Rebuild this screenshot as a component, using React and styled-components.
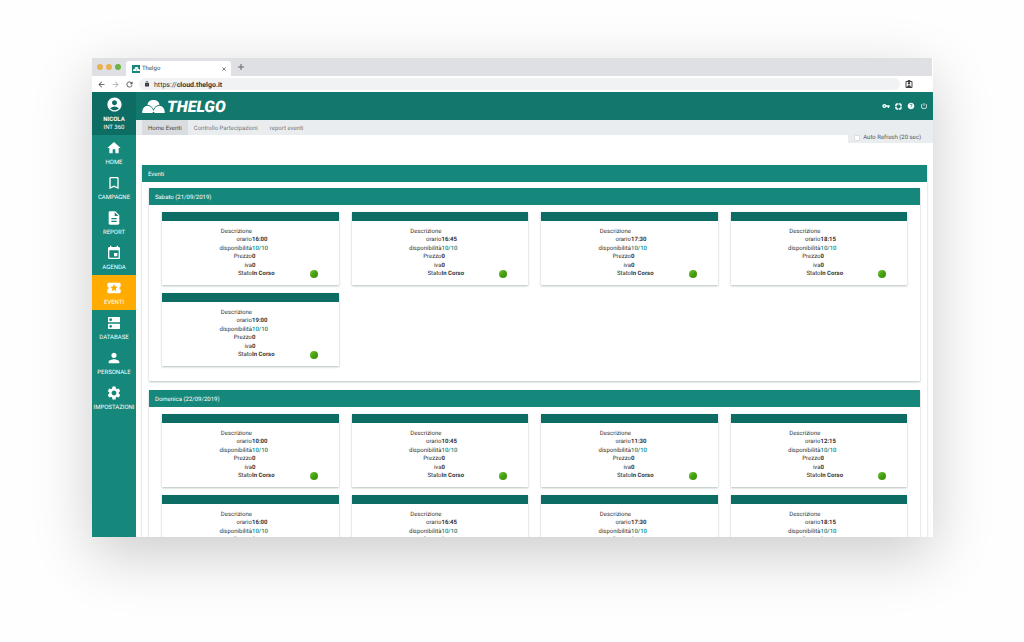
import React from 'react';
import styled, { createGlobalStyle } from 'styled-components';
import {
  MdAccountCircle,
  MdArrowBack,
  MdArrowForward,
  MdBookmarkBorder,
  MdDescription,
  MdDns,
  MdEvent,
  MdHelp,
  MdHome,
  MdLocalPlay,
  MdLock,
  MdPerson,
  MdPowerSettingsNew,
  MdRefresh,
  MdSettings,
  MdVpnKey,
} from 'react-icons/md';

const menu = [
  { label: 'HOME', icon: MdHome },
  { label: 'CAMPAGNE', icon: MdBookmarkBorder },
  { label: 'REPORT', icon: MdDescription },
  { label: 'AGENDA', icon: MdEvent },
  { label: 'EVENTI', icon: MdLocalPlay, active: true },
  { label: 'DATABASE', icon: MdDns },
  { label: 'PERSONALE', icon: MdPerson },
  { label: 'IMPOSTAZIONI', icon: MdSettings },
];

const tabs = ['Home Eventi', 'Controllo Partecipazioni', 'report eventi'];

const days = [
  {
    title: 'Sabato (21/09/2019)',
    slots: ['16:00', '16:45', '17:30', '18:15', '19:00'],
  },
  {
    title: 'Domenica (22/09/2019)',
    slots: ['10:00', '10:45', '11:30', '12:15', '16:00', '16:45', '17:30', '18:15'],
  },
];

const LogoMark = ({ width, height }) => (
  <svg width={width} height={height} viewBox="0 0 68 39" fill="currentColor" aria-hidden="true">
    <path d="M34 0c10 0 17 6 18 14-8 1-14 6-18 14-4-8-10-13-18-14C17 6 24 0 34 0z" />
    <path d="M0 39c0-13 7-22 16-22s15 7 18 16c3-9 9-16 18-16s16 9 16 22H38l-4-4-4 4z" />
  </svg>
);

const Slot = ({ time }) => (
  <Card>
    <CardHeader />
    <CardBody>
      <Field>
        <dt>Descrizione</dt>
        <dd />
      </Field>
      <Field>
        <dt>orario</dt>
        <Value>{time}</Value>
      </Field>
      <Field>
        <dt>disponibilità</dt>
        <Seats>10/10</Seats>
      </Field>
      <Field>
        <dt>Prezzo</dt>
        <Value>0</Value>
      </Field>
      <Field>
        <dt>iva</dt>
        <Value>0</Value>
      </Field>
      <Field>
        <dt>Stato</dt>
        <Value>
          In Corso
          <StatusDot />
        </Value>
      </Field>
    </CardBody>
  </Card>
);

const App = () => {
  return (
    <Page>
      <GlobalStyle />
      <Window>
        <TabStrip>
          <Lights>
            <Light $color="#e9b04f" />
            <Light $color="#e9b04f" />
            <Light $color="#6cb33f" />
          </Lights>
          <BrowserTab>
            <Favicon>
              <LogoMark width={7} height={4} />
            </Favicon>
            <TabTitle>Thelgo</TabTitle>
            <TabButton aria-label="Close tab">
              <svg width="4" height="4" viewBox="0 0 4 4" stroke="currentColor" strokeWidth="0.8" fill="none">
                <path d="M.3.3l3.4 3.4M3.7.3L.3 3.7" />
              </svg>
            </TabButton>
          </BrowserTab>
          <TabButton aria-label="New tab">
            <svg width="6" height="6" viewBox="0 0 6 6" stroke="currentColor" fill="none">
              <path d="M3 0v6M0 3h6" />
            </svg>
          </TabButton>
        </TabStrip>
        <AddressRow>
          <BrowserButton aria-label="Back"><MdArrowBack /></BrowserButton>
          <BrowserButton aria-label="Forward" $muted><MdArrowForward /></BrowserButton>
          <BrowserButton aria-label="Reload"><MdRefresh /></BrowserButton>
          <Address>
            <MdLock />
            <Url>https://<b>cloud.thelgo.it</b></Url>
          </Address>
          <BrowserButton aria-label="Profile">
            <svg width="8" height="8" viewBox="0 0 16 16" fill="none" stroke="currentColor" strokeWidth="2">
              <path d="M2 3h12v12H2zM6 1h4v2H6z" />
              <path d="M8 4a2 2 0 0 1 0 5 2 2 0 0 1 0-5zM4 14c0-5 8-5 8 0z" fill="currentColor" stroke="none" />
            </svg>
          </BrowserButton>
        </AddressRow>
        <Workspace>
          <Sidebar>
            <User>
              <MdAccountCircle />
              <UserName>NICOLA</UserName>
              <span>INT 360</span>
            </User>
            <nav>
              {menu.map(({ label, icon: Icon, active }) => (
                <MenuItem href="#" key={label} $active={active}>
                  <Icon />
                  {label}
                </MenuItem>
              ))}
            </nav>
          </Sidebar>
          <Main>
            <Header>
              <Brand>
                <LogoMark width={23} height={13} />
                THELGO
              </Brand>
              <Tools>
                <ToolButton aria-label="Password"><MdVpnKey /></ToolButton>
                <ToolButton aria-label="Support">
                  <svg width="7" height="7" viewBox="0 0 14 14" fill="none" stroke="currentColor" strokeWidth="3">
                    <rect x="2" y="2" width="10" height="10" rx="2" />
                    <path d="M7 0v4M7 10v4M0 7h4M10 7h4" stroke="#12776c" strokeWidth="1" />
                  </svg>
                </ToolButton>
                <ToolButton aria-label="Help"><MdHelp /></ToolButton>
                <ToolButton aria-label="Logout"><MdPowerSettingsNew /></ToolButton>
              </Tools>
            </Header>
            <SubBar>
              <Tabs>
                {tabs.map((tab, i) => (
                  <Tab href="#" key={tab} $active={i === 0}>{tab}</Tab>
                ))}
              </Tabs>
              <Refresh>
                <input type="checkbox" />
                Auto Refresh (20 sec)
              </Refresh>
            </SubBar>
            <Content>
              <Panel>
                <PanelTitle>Eventi</PanelTitle>
                <Days>
                  {days.map(day => (
                    <Panel key={day.title}>
                      <PanelTitle>{day.title}</PanelTitle>
                      <Slots>
                        {day.slots.map(time => (
                          <Slot key={time} time={time} />
                        ))}
                      </Slots>
                    </Panel>
                  ))}
                </Days>
              </Panel>
            </Content>
          </Main>
        </Workspace>
      </Window>
    </Page>
  )
};

export default App;

const GlobalStyle = createGlobalStyle`
  * {
    box-sizing: border-box;
  }

  body {
    margin: 0;
    background: #fefefe;
    color: #333;
    font-family: Roboto, sans-serif;
    font-size: 6px;
    line-height: 8px;
    text-rendering: geometricPrecision;
  }

  button {
    display: flex;
    padding: 0;
    border: 0;
    background: none;
    color: inherit;
    font: inherit;
  }

  a {
    color: inherit;
    text-decoration: none;
  }

  svg {
    display: block;
    flex: none;
  }
`

const Page = styled.div`
  display: flex;
  height: 100vh;
  padding: 58px 91px 105px 92px;
`

const Window = styled.div`
  flex: 1;
  display: flex;
  flex-direction: column;
  min-width: 0;
  overflow: hidden;
  background: #fff;
  box-shadow: 0 18px 56px rgba(0, 0, 0, 0.2);
`

const TabStrip = styled.div`
  flex: none;
  display: flex;
  align-items: center;
  height: 18px;
  margin-right: 1px;
  padding-left: 5px;
  background: #dfe0e4;
  color: #666;
`

const Lights = styled.div`
  display: flex;
  gap: 3px;
`

const Light = styled.span`
  width: 6px;
  height: 6px;
  border-radius: 50%;
  background: ${props => props.$color};
`

const BrowserTab = styled.div`
  display: flex;
  align-items: center;
  align-self: flex-end;
  width: 105px;
  height: 15px;
  margin: 0 7px 0 5px;
  padding: 0 5px 0 6px;
  border-radius: 3px 3px 0 0;
  background: #fff;
`

const Favicon = styled.span`
  display: grid;
  place-items: center;
  width: 8px;
  height: 8px;
  background: #15877b;
  color: #fff;
`

const TabTitle = styled.span`
  flex: 1;
  padding: 1px 0 0 2px;
  color: #444;
`

const TabButton = styled.button`
  align-items: center;
`

const AddressRow = styled.div`
  flex: none;
  display: flex;
  align-items: center;
  height: 16px;
  padding: 0 20px 0 5px;
  gap: 5px;
`

const BrowserButton = styled.button`
  && {
    color: ${props => (props.$muted ? '#aaa' : '#444')};
    font-size: 9px;
  }
`

const Address = styled.div`
  flex: 1;
  display: flex;
  align-items: center;
  gap: 4px;
  height: 12px;
  padding-left: 5px;
  border-radius: 6px;
  background: #f1f2f4;
`

const Url = styled.span`
  padding-top: 1px;
  font-size: 7px;
`

const Workspace = styled.div`
  flex: 1;
  display: flex;
  min-height: 0;
`

const Sidebar = styled.aside`
  flex: none;
  width: 44px;
  background: #15877b;
  color: #fff;
`

const User = styled.div`
  display: flex;
  flex-direction: column;
  align-items: center;
  height: 43px;
  padding-top: 4px;
  background: #0d6c64;

  svg {
    width: 17px;
    height: 17px;
    margin-bottom: 3px;
  }
`

const UserName = styled.strong`
  font-weight: 700;
`

const MenuItem = styled.a`
  display: flex;
  flex-direction: column;
  align-items: center;
  gap: 3px;
  height: 35px;
  padding-top: 5px;
  background: ${props => (props.$active ? '#ffab00' : 'transparent')};

  svg {
    width: 16px;
    height: 16px;
  }
`

const Main = styled.main`
  flex: 1;
  min-width: 0;
`

const Header = styled.header`
  display: flex;
  align-items: center;
  justify-content: space-between;
  height: 28px;
  padding: 0 5px 0 6px;
  background: #12776c;
  color: #fff;
`

const Brand = styled.div`
  display: flex;
  align-items: center;
  gap: 2px;
  padding-top: 1px;
  font-size: 16px;
  font-style: italic;
  font-weight: 900;
`

const Tools = styled.div`
  display: flex;
  align-items: center;
  gap: 5px;
`

const ToolButton = styled.button`
  && {
    font-size: 8px;
  }
`

const SubBar = styled.div`
  display: flex;
  align-items: flex-start;
  justify-content: space-between;
  height: 15px;
  padding-left: 6px;
  background: #e9edf0;
`

const Tabs = styled.nav`
  display: flex;
`

const Tab = styled.a`
  padding: 5px 6px 2px;
  background: ${props => (props.$active ? '#dadddf' : 'transparent')};
  color: ${props => (props.$active ? '#444' : '#777')};
`

const Refresh = styled.label`
  display: flex;
  align-items: center;
  gap: 3px;
  margin-top: 10px;
  padding: 4px 12px 1px 6px;
  background: #e9edf0;
  color: #555;

  input {
    appearance: none;
    width: 6px;
    height: 6px;
    margin: 0;
    border: 1px solid #ddd;
    border-radius: 1px;
    background: #fff;
  }
`

const Content = styled.div`
  padding: 30px 6px 0;
`

const Panel = styled.section`
  background: #fff;
  box-shadow: 0 1px 2px rgba(0, 60, 55, 0.3);
`

const PanelTitle = styled.h2`
  margin: 0;
  padding: 6px 6px 3px;
  background: #15877b;
  color: #fff;
  font-size: 6px;
  font-weight: 400;
`

const Days = styled.div`
  display: grid;
  gap: 9px;
  padding: 6px 7px;
`

const Slots = styled.div`
  display: grid;
  grid-template-columns: repeat(4, 1fr);
  gap: 8px 13px;
  padding: 7px 13px 15px;
`

const Card = styled.article`
  background: #fff;
  box-shadow: 0 1px 2px rgba(0, 40, 40, 0.3);
`

const CardHeader = styled.div`
  height: 9px;
  background: #0d6c64;
`

const CardBody = styled.dl`
  display: flex;
  flex-direction: column;
  justify-content: space-between;
  height: 64px;
  margin: 0;
  padding: 7px 0;
`

const Field = styled.div`
  display: grid;
  grid-template-columns: 51% 1fr;

  dt {
    text-align: right;
  }
`

const Value = styled.dd`
  display: flex;
  align-items: center;
  justify-content: space-between;
  margin: 0;
  padding-right: 21px;
  font-weight: 700;
`

const Seats = styled(Value)`
  color: #15877b;
  font-weight: 500;
`

const StatusDot = styled.span`
  width: 8px;
  height: 8px;
  border-radius: 50%;
  background: linear-gradient(135deg, #7cc63a 0%, #45a010 50%, #3a8f08 100%);
`
